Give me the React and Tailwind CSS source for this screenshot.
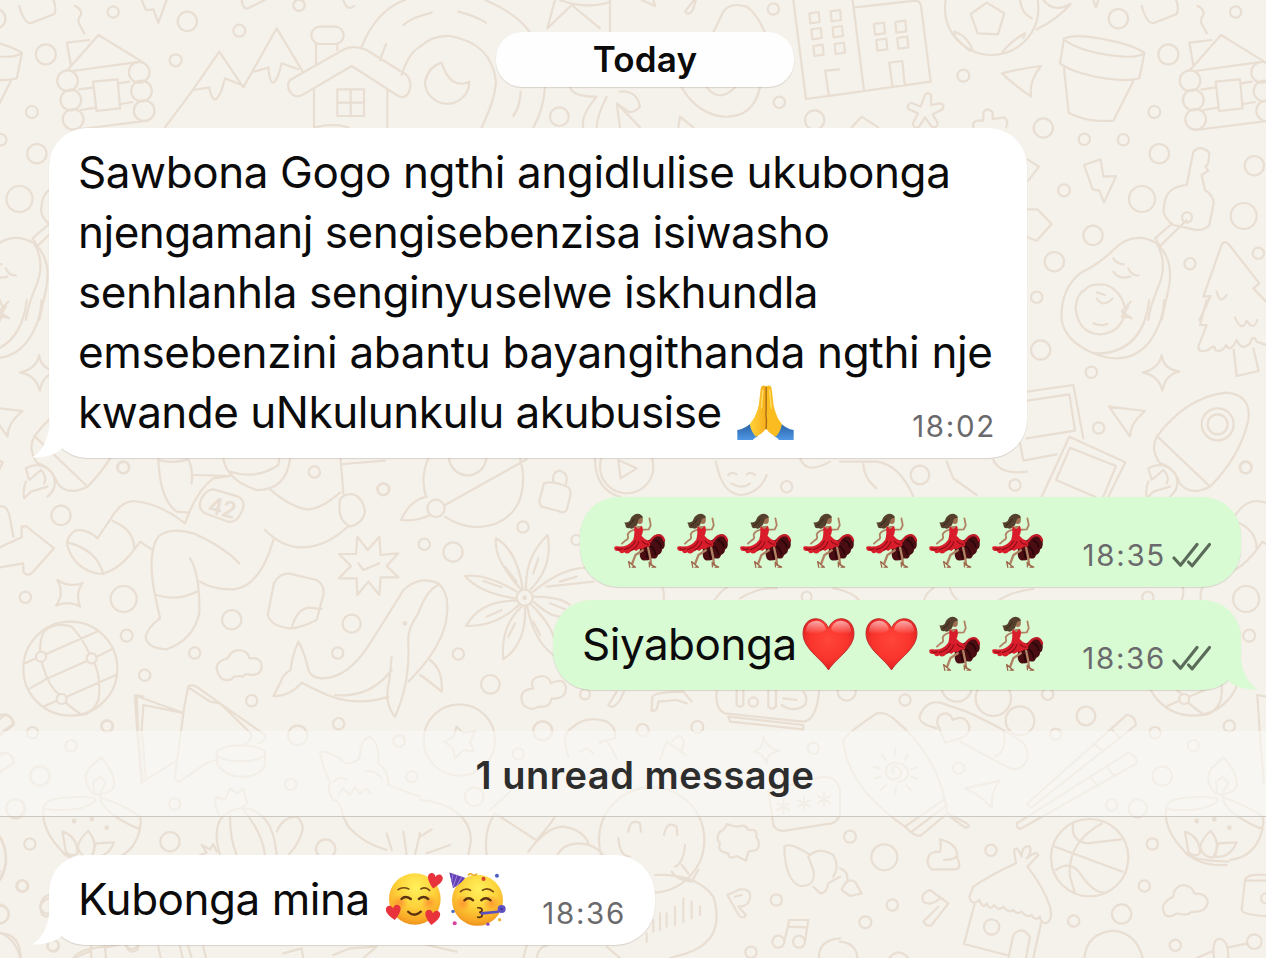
import React from "react";

const PERIOD = 1122.5;

// Doodle sheets: each is drawn on a 3x grid whose origin sits at (x, y).
const rightSheets = [
  {
    x: 840, y: 0,
    d: "M45,22L225,2Q240,2 243,18L272,245L0,283M38,0L72,272M102,72l30,-4l3,32l-30,4zM166,66l30,-4l3,32l-30,4zM109,120l30,-4l3,32l-30,4zM172,114l30,-4l3,32l-30,4zM157,258L148,188L187,183L194,255M440,8L493,40L474,103L413,100L392,42ZM345,95Q385,110 398,152M343,95L345,112L388,152M485,160Q510,125 555,100L550,114M540,0Q545,40 575,55M610,0Q640,40 692,12Q650,60 590,88M760,0L768,22L775,0M486,220Q545,205 603,198Q565,245 574,290Q530,262 486,220M672,115Q700,105 740,110Q860,125 913,158Q900,172 850,170Q730,160 676,122M672,115L660,190Q700,220 800,236Q870,245 898,235L913,160M672,205L686,338Q740,368 820,362L880,243M905,18Q920,70 940,70L1010,42Q1018,25 1008,0M1073,18Q1095,30 1090,45Q1075,62 1090,80L1100,100M1050,210L1143,105L1278,188M1060,195L1048,128L1115,120M1065,213L1270,185M1127,245L1200,238L1208,325L1137,333ZM1085,268L1125,263M1090,330L1135,323M1205,250L1235,245M1210,312L1245,306M1067,390L1290,362M255,285q8,-12 18,0l0,30l25,-5q18,2 10,18l-30,15l15,25q0,18 -18,12l-20,-28l-18,28q-18,8 -18,-10l15,-30l-28,-12q-8,-14 8,-20l28,12ZM400,382q-5,-15 12,-20l18,0l0,-25q12,-18 28,0l0,20l35,-5q15,12 5,30M35,382L65,350L115,382M562,478L597,500L565,542M562,628L592,628L635,672L590,722L562,712M732,495L782,478L790,530L828,528L792,608L778,572L758,568ZM1040,555L1060,455Q1080,432 1108,458L1105,490L1096,500L1105,512L1085,525L1095,570Q1125,590 1120,615L1108,675Q1090,695 1060,688L1000,675Q965,650 972,620Q975,560 1040,555M995,672L945,715L960,738L1040,660M665,960Q660,870 720,820Q780,790 820,750Q880,690 950,730Q1005,780 985,870L965,960M950,730Q985,790 955,860Q930,920 925,960M820,775Q830,792 852,793M820,815Q835,840 870,830M865,805Q875,828 895,826M707,925Q710,880 735,870Q750,848 800,855Q845,875 855,925M770,877L795,885M770,895Q790,925 818,895M872,905L845,935L875,955M1078,960L1112,888L1090,890L1143,740Q1152,715 1168,735L1258,850L1240,865L1278,905M1130,875Q1140,915 1160,885",
    c: [[455,25,140],[835,56,29],[1187,36,17],[985,163,30],[370,227,18],[610,384,29],[733,418,17],[850,419,17],[943,336,18],[958,461,29],[1243,497,29],[672,571,18],[906,597,39],[1211,648,39],[759,706,29],[643,785,29],[1050,791,17],[1255,760,17],[590,892,17],[1050,242,31],[1060,300,31],[1067,358,31],[1265,217,31],[1272,273,31],[1280,332,31],[1041,652,15]],
  },
  {
    x: 1020, y: 300,
    d: "M125,60Q135,120 210,155Q320,205 385,130Q430,70 432,0M388,0Q370,150 245,160Q220,160 210,155M167,25Q175,100 240,103Q300,100 315,40M220,70Q240,80 262,72M330,52L305,50L325,20M560,0L540,75L560,75L535,140Q535,160 565,150Q585,130 585,150Q605,160 618,135Q630,160 650,120Q665,155 690,130Q700,100 710,125L738,135M645,52Q665,100 680,62Q700,95 712,60M641,150L650,228L716,213L700,145M425,165Q430,208 478,214Q435,225 427,272Q415,225 368,218Q418,205 425,165ZM267,320L375,333Q330,370 330,410ZM410,410Q500,290 620,278Q695,285 685,360Q660,470 570,560Q510,590 480,550Q460,500 420,490Q390,450 410,410M415,412L565,555M385,505Q430,480 465,520Q485,560 450,590M385,505L395,540L430,510Q450,530 440,550M385,545Q375,570 380,595L400,575L450,560M22,275L160,255L190,415M22,302L148,283L165,392L20,415M0,430L10,482L110,463M65,590L148,410L316,487L265,590M225,590L108,540L150,443L288,498L250,590",
    c: [[62,150,29],[214,217,17],[236,384,17],[677,502,18],[593,373,30],[593,373,48]],
  },
  {
    x: 840, y: 680,
    d: "M10,180Q20,160 110,100Q135,95 160,115Q300,230 322,400L245,465Q230,475 195,440Q20,320 10,180M195,440L310,360M215,455L322,375M322,400L380,430Q395,440 375,443L330,410M160,280Q150,265 165,258Q190,265 180,290Q150,310 138,280Q135,250 165,248Q205,250 205,285Q195,305 175,305M165,205V225M125,225L138,240M100,260L120,265M103,295L122,290M122,330L138,315M167,342V322M212,330L198,315M232,297L214,290M230,262L212,268M205,225L194,240M290,145Q230,130 240,105Q260,60 300,68L380,95Q500,150 545,185Q570,210 560,240Q545,275 510,265L360,185M490,155Q505,210 465,230M315,188L292,130Q290,100 320,100Q335,105 338,120Q375,100 388,140Q390,165 360,175ZM375,325L478,302Q450,340 457,385Q420,345 375,325M560,372L860,105Q885,105 888,135L575,382ZM815,148L840,175M760,190L790,215M530,430L865,218Q890,225 890,250L545,445Q530,450 530,430M753,295L775,320M800,262L825,290M645,500L848,575M700,430Q690,480 740,490L843,478M785,430Q680,490 690,590L705,640M648,570Q690,540 720,580Q760,640 795,638M1150,232Q1195,280 1190,320Q1170,350 1125,340Q1090,300 1115,265L1150,232M1130,335L1128,305L1148,290L1165,310L1150,335V355M978,385Q980,355 1050,352Q1130,348 1135,358Q1120,385 1050,390Q1000,392 978,385Q970,450 1035,515Q1080,560 1160,555M1150,360Q1160,400 1260,445Q1275,440 1268,410Q1230,380 1145,350M1268,445Q1250,530 1170,540M1035,455Q1080,470 1080,520Q1060,535 1045,515ZM1112,453Q1145,490 1120,532Q1090,535 1080,500Q1090,470 1112,453M1190,487L1135,490L1125,530Q1170,535 1190,487M1035,515Q1040,540 1165,545M300,478Q355,490 352,535Q365,560 350,568H275Q255,550 268,525Q275,515 300,515Q305,495 300,478M312,540Q345,540 352,525M300,655Q270,680 250,665Q240,640 270,630L325,670L275,735Q260,742 250,725L295,680M388,650L400,620Q460,580 528,550L522,510Q530,495 545,530Q545,495 570,500Q575,520 560,535Q590,510 595,525L562,560Q610,620 630,680Q640,725 615,730Q600,725 600,710Q585,725 575,705Q560,715 545,695Q530,705 520,690Q505,700 490,680Q475,695 462,675Q450,695 440,670Q430,690 418,660Q395,680 388,650M403,675L372,792L500,825M603,730L580,834M505,834L520,765Q545,735 570,770L558,834M975,705Q955,670 1000,650Q1000,620 1030,615Q1060,620 1062,640Q1105,640 1103,670Q1095,700 1055,695Q1040,710 1010,700Q990,715 975,705M1278,585Q1220,580 1215,600L1205,690Q1210,705 1278,708M1215,602H1278M733,834Q740,760 820,752Q890,760 908,834M1070,834L1120,812M1165,802L1222,790M1122,834Q1115,775 1140,777Q1165,780 1165,834M0,785Q50,790 52,834M148,834Q175,800 205,834M0,565Q25,575 22,600M5,630Q20,590 45,605L65,640L30,648ZM1278,50L1252,45L1262,200L1272,310",
    c: [[350,20,45],[460,55,53],[540,122,43],[20,35,27],[195,60,17],[738,108,28],[647,163,17],[623,43,17],[945,158,17],[1168,138,17],[1060,197,17],[967,288,29],[893,385,27],[815,375,17],[356,265,17],[30,470,18],[133,532,39],[453,511,17],[157,675,17],[76,727,18],[937,492,17],[913,618,17],[845,702,29],[701,723,17],[1006,796,17],[749,533,116],[455,741,23],[1243,785,22],[1278,655,15],[1070,423,4],[1123,417,4],[1168,443,4]],
  },
];

const leftSheets = [
  {
    x: 0, y: 440,
    d: "M0,322L65,292L65,260L78,258L162,325L95,400Q80,410 70,395L70,370L0,382M0,200Q20,195 28,225L40,290M172,420Q210,445 248,428Q225,460 240,500Q205,480 168,497Q195,460 172,420M137,643L290,575M75,670L108,655M290,650L335,628M137,718L262,662M90,745L137,718M200,770L348,705M130,800L170,782M120,635Q120,590 135,572Q165,545 215,560Q245,590 268,640M125,665Q145,740 178,763M283,668Q305,720 295,780Q280,820 245,825Q210,800 197,788M330,240Q360,185 400,183Q480,190 555,250Q590,150 640,115L690,108M580,105L685,108M475,58Q480,180 530,215L565,218M475,60Q520,72 565,58Q580,90 575,130M670,55Q680,120 770,150Q860,150 870,55M688,95Q770,120 835,75L838,55M640,148L715,170Q740,185 725,215Q710,250 685,245L615,220Q590,205 605,175Q620,148 640,148M810,148Q870,200 920,208Q960,210 1020,158M1020,180Q1030,160 1060,163Q1090,175 1095,215Q1090,250 1050,260Q1010,240 1020,180M1022,58L1030,160M1030,72L1155,62M795,270Q850,325 910,322Q980,320 1045,258M820,300Q780,440 700,448Q640,450 600,425M330,240L292,295Q260,265 225,272Q195,295 203,320Q225,390 300,402Q360,395 420,305L455,328M338,243Q405,270 402,330M205,308Q290,330 310,402M570,355Q600,400 598,520Q580,600 500,628Q440,625 437,590Q440,565 480,535L465,465Q440,340 475,290Q510,260 580,280Q670,320 718,370M470,465Q530,485 590,455M865,400L950,420Q975,435 970,465L950,540Q900,565 870,565Q815,560 803,525L822,430Q835,402 865,400M875,565Q890,505 930,503L965,507",
    c: [[211,686,141],[123,650,15],[275,655,15],[185,777,15],[370,83,17],[183,226,29],[76,472,17],[371,477,39],[380,587,18]],
  },
];

const middleSheets = [
  {
    x: 0, y: 0,
    d: "M425,0L438,30L460,28L475,68L500,0M725,0Q730,35 750,22L795,0M1030,0Q1040,35 1062,18M495,382L575,275L658,155L730,262L830,85L910,218M580,270L628,262Q640,330 665,270L675,235L725,255M762,215L805,203Q812,280 835,225L845,190L895,208M960,80H1005a26,26 0 0 1 0,52H960a26,26 0 0 1 0,-52ZM948,130V190M1012,130V150M870,240L1020,155Q1055,130 1100,150L1220,225Q1240,250 1225,280Q1210,300 1190,285L1055,198L915,280Q885,300 870,275Q858,255 870,240M942,265V382M1162,268V382M1012,268H1092V348H1012ZM1052,268V348M1012,308H1092M945,382Q1000,368 1045,382M1085,140Q1130,30 1215,0M1140,180L1158,132M1205,225Q1225,160 1260,140M1210,75Q1235,55 1260,48",
    c: [[562,64,29],[718,92,18],[527,181,18],[897,16,17]],
  },
  {
    x: 420, y: 0,
    d: "M0,140Q40,105 90,108Q215,130 228,245Q225,300 185,382M65,188Q25,200 15,245A66,66 0 0 0 148,245Q90,270 65,188M195,0Q290,40 330,97M0,48L35,38M115,35Q160,45 198,68M375,262Q370,330 340,382M302,275Q300,320 280,348M405,0L382,85L450,20M570,0V95M455,15L540,85M420,0Q500,30 570,5M665,0L705,18L700,0M450,262Q460,290 530,290Q480,350 490,382M560,290Q530,350 530,382M600,275Q650,270 660,320Q640,340 625,335L590,310L600,382M590,310L660,382M880,97L910,35Q930,5 980,20Q1010,40 1035,97M785,262Q830,340 910,350Q1000,355 1020,262M860,262Q900,310 945,262M822,0L795,35Q810,50 820,25L828,0M775,382L780,350L820,382M1120,0L1158,297L1260,283M1168,40l28,-4l3,30l-28,4zM1174,88l28,-4l3,30l-28,4zM1180,138l28,-4l3,30l-28,4zM1232,34l28,-4l3,30l-28,4zM1238,82l28,-4l3,30l-28,4zM1244,132l28,-4l3,30l-28,4zM1258,208L1216,212L1226,285",
    c: [[418,350,28],[1060,27,17],[1078,307,17],[1184,360,29]],
  },
  {
    x: 0, y: 440,
    d: "M1072,290L1103,330L1138,290L1142,345L1195,340L1160,378L1195,412L1142,412L1138,465L1105,425L1072,465L1070,415L1017,415L1053,378L1017,342L1068,342ZM1075,370L1090,390L1138,370M660,710Q640,680 660,665Q675,655 683,655Q700,620 735,635Q745,640 748,655Q785,650 785,680Q785,705 750,705Q735,698 730,710Q700,705 695,718Q670,725 660,710M548,818L410,768L415,880L428,1025L525,965M545,818L430,795L425,870L437,1010M565,738Q575,733 590,740L660,790L795,885Q800,905 775,910M570,745L630,785L660,790L752,880Q760,895 735,912M565,738L553,800L525,1005Q520,1025 540,1025L610,975Q640,960 655,960M925,690Q915,640 895,605Q875,650 872,690Q850,700 840,730L820,768Q870,770 905,728L960,755M925,690Q935,715 965,714",
    c: [[695,539,29],[584,639,17],[434,706,17],[322,859,17],[943,96,17],[1150,148,17],[1055,551,27],[1013,639,17],[755,782,17],[1016,851,17],[893,886,29],[214,917,17]],
  },
  {
    x: 320, y: 450,
    d: "M0,685Q80,690 150,580Q220,470 250,420Q300,375 355,400Q390,430 380,500Q370,590 265,695M355,405Q320,420 295,490Q260,540 265,580Q270,700 225,800Q190,760 208,690L215,620M0,725Q100,775 205,740M45,735Q150,745 215,660M330,630Q370,660 365,725Q330,695 300,675M318,140Q300,80 325,25M375,200Q450,250 530,220Q620,180 608,60L600,25M375,165L620,28M320,140Q270,150 243,210Q290,215 330,195M672,100Q700,90 745,112Q755,120 750,140L740,180Q730,192 715,183L665,170Q655,160 660,145ZM700,95Q695,65 720,62Q748,70 737,105M605,420Q520,330 528,265Q590,300 608,415M618,415Q615,320 683,255Q700,350 632,418M640,425Q740,340 830,355M680,410L820,395M590,425Q500,370 435,378Q480,430 588,445M590,452Q480,450 438,528Q530,530 600,462M605,470Q540,530 550,628Q620,580 615,470M622,470Q640,570 700,615M632,462Q690,520 700,560M640,440Q720,440 750,465M640,455Q690,500 720,500M555,350L590,395M655,325L640,370M490,393L545,412M500,500L545,480M585,520L565,560M640,515L660,555M690,460L735,478M720,395L770,380M610,765Q590,720 640,715Q625,685 665,678Q690,680 692,700Q735,680 738,715Q735,750 695,745Q690,775 655,770Q635,785 610,765M825,25Q825,120 900,140",
    c: [[190,118,18],[313,283,17],[399,306,29],[609,231,17],[415,612,17],[511,703,28],[348,175,26],[237,874,17],[668,842,28],[769,270,15],[795,733,15],[418,870,107],[614,443,24],[614,443,4],[255,520,4],[443,20,56]],
  },
  {
    x: 0, y: 700,
    d: "M650,160a73,24 0 1 0 146,0a73,24 0 1 0 -146,0L652,195Q680,230 722,230Q780,230 795,195L795,160M0,45Q30,35 42,70L0,100M0,160Q30,150 42,185L0,220M960,155Q970,210 990,245Q980,275 1000,300Q1020,300 1030,350L1045,380Q1090,430 1160,450M960,155Q1000,155 1035,190Q1070,190 1080,170Q1080,120 1110,110Q1140,130 1135,190Q1165,210 1165,255L1260,290M1095,215Q1120,205 1145,235M1000,245Q1020,225 1040,240M1015,285L1030,265L1050,285L1065,262L1080,280L1100,265L1110,280M1160,400L1175,450M1210,395L1220,465M1245,465L1260,400M660,465Q640,400 660,360Q690,320 740,325Q820,340 830,465M690,345Q690,420 710,465M725,325Q785,390 795,465M830,395Q850,350 890,350Q915,370 905,400Q890,440 865,465M655,340Q640,310 650,290L675,300L690,265L712,280L730,265L742,310L720,325M600,465L620,458L605,435L630,448L640,432L650,455M0,410Q20,450 18,490Q10,530 0,540M0,700Q60,700 62,774M220,774Q240,745 320,740M475,740L482,774M540,740L548,774M565,740L575,774M610,740L618,774M850,760L905,745L910,774M1000,765L1050,745L1130,740L1090,774M145,585Q125,590 120,620Q130,645 145,640",
    c: [[120,228,29],[47,326,29],[524,312,17],[510,425,29],[977,447,29],[68,558,17],[872,253,17],[1197,122,18],[1235,230,17],[0,643,26],[160,738,17],[398,738,17]],
  },
  {
    x: 420, y: 680,
    d: "M110,140L128,158L165,155L150,185L162,215L130,210L105,235L100,205L72,185L100,172ZM445,230Q420,160 460,140Q500,105 560,125Q590,140 585,175L540,185M480,215L500,205L520,220M540,190L560,180L590,235M565,75L590,35M565,75Q580,90 600,60L612,35M695,92L697,50Q710,35 790,35L815,65M695,92Q712,98 715,65L770,60L800,70M890,32Q885,90 915,100L1150,125Q1190,120 1197,35M925,110L1150,135L1150,148L930,125ZM950,32V75Q960,85 970,75V32M1045,32V80Q1055,92 1068,80V32M1085,75Q1120,100 1155,75Q1165,50 1150,35M1090,55L1130,60M720,240L740,185L797,225M757,185Q780,150 792,185L785,215M1030,170Q1040,205 1078,212Q1040,220 1040,250Q1030,220 1003,215Q1030,205 1030,170M1235,430L1095,452Q1070,455 1060,435L1045,330L1210,290Q1250,290 1260,330V400Q1255,425 1235,430M1072,370l36,20M1072,390l36,-20M1090,360v40M1134,360l36,20M1134,380l36,-20M1152,350v40M1194,348l36,20M1194,368l36,-20M1212,338v40M625,455Q630,415 660,430L663,455M732,465Q740,420 770,440L772,465M595,475Q600,530 630,530M795,495Q790,550 765,560M755,575Q770,600 815,605L835,570M785,555L805,580M0,358Q150,380 153,480L145,525M0,470L35,448M20,520L90,495M210,390L270,335M200,525Q190,450 225,400L345,478M350,480Q395,430 405,408M325,515Q380,440 430,440Q490,450 505,490M412,525Q430,490 480,490Q530,495 550,525M705,585Q830,580 880,650Q920,780 800,820L750,834M700,720V755M720,700V750M740,700V740M765,680V735M790,655V725M815,665V715M840,680V705M680,760V785M560,800L600,834M900,455Q915,450 920,432Q940,440 955,440Q975,430 985,450Q1015,445 1008,470Q1025,490 1010,510L985,515L978,542L950,528Q925,540 925,520Q890,515 900,490Q885,475 900,455M1093,500Q1110,485 1170,525Q1200,500 1240,525Q1260,560 1240,590M1093,500Q1095,600 1140,618Q1190,620 1180,570L1165,530M1180,620L1200,640Q1220,640 1225,610Q1240,600 1260,590M922,645L960,628Q995,625 990,655Q985,680 955,680L978,705Q970,718 958,708ZM945,650L965,645M1093,785L1108,720L1165,720L1155,785M1105,740L1160,742M1197,834Q1195,780 1260,775M20,795L110,815M310,834L320,797M350,834Q355,800 380,797",
    c: [[368,153,29],[668,150,18],[832,141,18],[295,222,17],[1180,205,17],[163,350,28],[1069,660,17],[993,817,17],[1000,66,14],[695,480,158],[1075,785,18],[1137,785,18]],
  },
  {
    x: 600, y: 455,
    d: "M55,15L110,40L62,70ZM348,20Q365,115 420,120Q480,115 500,60M385,60Q395,48 410,58M440,58Q452,48 465,60M395,85Q425,105 450,85M600,10Q620,60 690,20M720,20L830,20Q900,30 940,125M790,20Q790,70 830,100M1040,20L1060,70L1130,120M1180,15Q1200,60 1280,50M190,440Q195,420 188,400M340,440Q360,410 380,398M420,430Q480,395 530,400M700,400Q760,410 780,440M970,440Q980,410 1000,400M1050,400Q1060,430 1080,440M1190,440Q1230,410 1300,402",
    c: [[80,35,80],[560,95,17],[960,60,28],[620,425,15],[1245,90,17]],
  },
];

function Sheet({ sheet }) {
  return (
    <g transform={`translate(${sheet.x} ${sheet.y}) scale(0.33333)`}>
      <path d={sheet.d} />
      {sheet.c.map(([cx, cy, r], i) => (
        <circle key={i} cx={cx} cy={cy} r={r} />
      ))}
    </g>
  );
}

function Wallpaper() {
  return (
    <svg
      className="pointer-events-none absolute inset-0 h-[958px] w-[1266px]"
      viewBox="0 0 1266 958"
      fill="none"
      stroke="#e9ded2"
      strokeWidth="6.6"
      strokeLinecap="round"
      strokeLinejoin="round"
      aria-hidden="true"
    >
      {middleSheets.map((s, i) => <Sheet key={i} sheet={s} />)}
      {[0, -PERIOD].map((dx) => (
        <g key={dx} transform={`translate(${dx} 0)`}>
          {rightSheets.map((s, i) => <Sheet key={i} sheet={s} />)}
        </g>
      ))}
      {[0, PERIOD].map((dx) => (
        <g key={dx} transform={`translate(${dx} 0)`}>
          {leftSheets.map((s, i) => <Sheet key={i} sheet={s} />)}
        </g>
      ))}
      <text
        x="207" y="512" transform="rotate(14 207 512)"
        fontFamily="Inter, sans-serif" fontSize="22" strokeWidth="0.8" fill="#e9ded2"
      >42</text>
    </svg>
  );
}

function Dancer() {
  return (
    <svg className="h-[56px] w-[53px] shrink-0" viewBox="0 0 160 168" fill="none" strokeLinecap="round" strokeLinejoin="round">
      <path d="M84 92 110 80 124 70Q134 60 144 68Q158 74 156 90Q158 104 148 110Q148 122 136 126Q132 140 118 136L106 142 92 143Q74 138 84 92Z" fill="#4a0d12" />
      <path d="M128 82Q142 88 144 102M112 98Q126 108 128 124M100 116L104 134" stroke="#26060a" strokeWidth="5" />
      <path d="M90 112 68 126 58 152M106 104 112 132 115 156" stroke="#b08264" strokeWidth="7" />
      <path d="M47 146 51 164M47 146Q60 158 68 163H58M109 148 110 162M110 150Q120 160 129 163H118" stroke="#9a5f44" strokeWidth="3.5" />
      <path d="M66 50Q42 56 45 68 48 78 38 82L27 92" stroke="#b08264" strokeWidth="5.5" />
      <path d="M86 50 108 49 114 36 110 16" stroke="#b08264" strokeWidth="5.5" />
      <path d="M66 40 84 38 90 54 80 60 66 56Z" fill="#b08264" />
      <path d="M61 80Q66 66 64 42L68 40Q76 56 86 38L89 42Q92 58 86 68L96 78Q116 84 112 100Q98 98 90 108Q78 106 70 114Q62 108 54 116Q44 126 34 118Q24 126 18 114Q4 116 4 106Q2 98 14 100Q44 104 61 80Z" fill="#d91d2a" />
      <path d="M112 86Q122 66 140 66Q150 68 154 82" stroke="#c41c28" strokeWidth="7" />
      <path d="M68 84Q58 104 34 110M78 86Q74 102 56 112M88 84Q94 94 106 94M12 107Q20 112 28 107" stroke="#8f0d1a" strokeWidth="3.5" />
      <ellipse cx="81" cy="20" rx="9" ry="13" fill="#a07254" />
      <path d="M60 8Q72-3 86 6Q92 12 88 15Q78 14 76 24Q74 38 66 40Q60 50 50 45Q40 48 38 39Q38 33 34 28Q48 30 52 20Q54 12 60 8Z" fill="#54402c" />
      <path d="M46 37Q58 32 64 18" stroke="#35261a" strokeWidth="3" />
    </svg>
  );
}

function Heart() {
  return (
    <svg className="h-[53px] w-[53px] shrink-0" viewBox="0 0 156 158">
      <defs>
        <radialGradient id="heartFill" cx="50%" cy="42%" r="60%">
          <stop offset="0" stopColor="#ff4539" />
          <stop offset="0.6" stopColor="#f9352d" />
          <stop offset="1" stopColor="#dd1e20" />
        </radialGradient>
        <linearGradient id="heartGloss" x1="0" y1="0" x2="0" y2="1">
          <stop offset="0" stopColor="#fff" stopOpacity="0.6" />
          <stop offset="1" stopColor="#fff" stopOpacity="0" />
        </linearGradient>
      </defs>
      <path d="M78 30C70 10 54 2 40 2C18 2 2 20 2 46C2 92 58 122 78 155C98 122 154 92 154 46C154 20 138 2 116 2C102 2 86 10 78 30Z" fill="url(#heartFill)" stroke="#b3262a" strokeWidth="2.5" />
      <path d="M10 40C12 18 26 8 42 8C58 9 68 20 70 34C56 50 20 52 10 40Z" fill="url(#heartGloss)" />
      <path d="M146 40C144 18 130 8 114 8C98 9 88 20 86 34C100 50 136 52 146 40Z" fill="url(#heartGloss)" />
    </svg>
  );
}

function Pray() {
  return (
    <svg className="h-[55px] w-[57px] shrink-0" viewBox="0 0 168 164">
      <defs>
        <linearGradient id="sleeve" x1="0" y1="0" x2="0" y2="1">
          <stop offset="0" stopColor="#2a62a6" />
          <stop offset="1" stopColor="#4f97e6" />
        </linearGradient>
        <linearGradient id="hand" x1="0" y1="0" x2="1" y2="0">
          <stop offset="0" stopColor="#ffd23a" />
          <stop offset="1" stopColor="#f7ae1c" />
        </linearGradient>
      </defs>
      <path d="M0 134Q22 130 38 116L62 152Q50 158 46 164H0Z" fill="url(#sleeve)" />
      <path d="M168 134Q146 130 132 116L108 152Q122 158 124 164H168Z" fill="url(#sleeve)" />
      <path d="M86 4Q74-2 70 8L64 60Q58 88 46 104Q36 114 38 122Q44 144 56 154Q76 144 86 130Z" fill="url(#hand)" />
      <path d="M86 4Q98-2 102 8L108 60Q114 88 124 104Q134 114 132 122Q126 144 114 154Q94 144 86 130Z" fill="#fbbc22" />
      <path d="M86 6V76Q84 90 87 104L86 132" stroke="#a56a10" strokeWidth="4" fill="none" />
      <path d="M76 14L72 70M96 14L101 70" stroke="#ffdf68" strokeWidth="4" fill="none" />
    </svg>
  );
}

function FaceDefs({ id }) {
  return (
    <defs>
      <radialGradient id={id} cx="52%" cy="28%" r="74%">
        <stop offset="0" stopColor="#fff15c" />
        <stop offset="0.5" stopColor="#fdd23b" />
        <stop offset="0.85" stopColor="#f9a826" />
        <stop offset="1" stopColor="#e98d1c" />
      </radialGradient>
      <radialGradient id={`${id}Blush`}>
        <stop offset="0" stopColor="#ff6d2a" stopOpacity="0.55" />
        <stop offset="1" stopColor="#ff6d2a" stopOpacity="0" />
      </radialGradient>
    </defs>
  );
}

const tinyHeart = "M0 -13C-3 -22 -12 -25 -18 -20C-27 -13 -22 2 0 22C22 2 27 -13 18 -20C12 -25 3 -22 0 -13Z";

function LoveFace() {
  return (
    <svg className="h-[54px] w-[57px] shrink-0" viewBox="0 0 170 160" fill="none" strokeLinecap="round">
      <FaceDefs id="loveFace" />
      <circle cx="86" cy="80" r="77" fill="url(#loveFace)" />
      <circle cx="42" cy="90" r="24" fill="url(#loveFaceBlush)" />
      <circle cx="128" cy="90" r="24" fill="url(#loveFaceBlush)" />
      <path d="M36 52Q50 42 68 50M104 50Q118 42 130 54" stroke="#7a4a12" strokeWidth="5" />
      <path d="M46 80Q58 68 74 80M98 80Q112 68 126 80" stroke="#5c3310" strokeWidth="7" />
      <path d="M66 118Q84 136 104 118" stroke="#5c3310" strokeWidth="7" />
      <path transform="translate(145 27) rotate(12)" d={tinyHeart} fill="#e8323c" />
      <path transform="translate(23 121) rotate(-8)" d={tinyHeart} fill="#e8323c" />
      <path transform="translate(138 136) rotate(8)" d={tinyHeart} fill="#e8323c" />
    </svg>
  );
}

function PartyFace() {
  return (
    <svg className="h-[55px] w-[57px] shrink-0" viewBox="0 0 170 163" fill="none" strokeLinecap="round">
      <FaceDefs id="partyFace" />
      <circle cx="85" cy="84" r="76" fill="url(#partyFace)" />
      <circle cx="42" cy="92" r="24" fill="url(#partyFaceBlush)" />
      <circle cx="126" cy="92" r="24" fill="url(#partyFaceBlush)" />
      <path d="M34 58Q48 46 64 54M100 54Q116 44 132 58" stroke="#7a4a12" strokeWidth="5" />
      <path d="M46 84Q58 72 72 84M96 84Q110 72 124 84" stroke="#5c3310" strokeWidth="7" />
      <path d="M86 106Q102 106 98 116Q94 120 90 119Q102 122 98 132Q94 136 86 134" stroke="#5c3310" strokeWidth="5" />
      <path d="M1 1L48 17Q40 32 12 48Z" fill="#6440b4" />
      <path d="M12 5L8 28M24 9L13 42M38 14L24 40" stroke="#9c84dc" strokeWidth="3" />
      <path d="M98 123L146 118" stroke="#5b50c0" strokeWidth="8" />
      <circle cx="157" cy="110" r="12" fill="#6352c4" />
      <circle cx="157" cy="110" r="4" fill="#4338a0" />
      <circle cx="103" cy="20" r="6" fill="#d8442e" />
      <circle cx="143" cy="11" r="6" fill="#4a61c4" />
      <circle cx="17" cy="152" r="6" fill="#d8409a" />
      <circle cx="12" cy="117" r="5" fill="#4a61c4" />
      <circle cx="116" cy="155" r="5" fill="#8a48c0" />
      <circle cx="151" cy="142" r="5" fill="#e9b437" />
      <path d="M58 8Q64 2 70 8Q76 12 82 6" stroke="#eab02c" strokeWidth="5" />
    </svg>
  );
}

function Checks() {
  return (
    <svg className="h-[26px] w-[40px] shrink-0" viewBox="0 0 40 26" fill="none" stroke="#5b6b59" strokeWidth="3.1" strokeLinecap="round" strokeLinejoin="round">
      <path d="M2 16L8.5 23.3L25 2.5" />
      <path d="M16.5 20L20.2 23.8L37.5 2.5" />
    </svg>
  );
}

function Tail({ side }) {
  return side === "left" ? (
    <svg className="absolute bottom-0 -left-[18px] h-[44px] w-[50px]" viewBox="0 0 50 44" fill="#fff">
      <path d="M19 0C19 20 14 36 1 43.6C14 43.5 24 41 30 35.5L46 20V0Z" />
    </svg>
  ) : (
    <svg className="absolute bottom-0 -right-[18px] h-[44px] w-[50px]" viewBox="0 0 50 44" fill="#d9fbd3">
      <path d="M31 0C31 20 36 36 49 43.6C36 43.5 26 41 20 35.5L4 20V0Z" />
    </svg>
  );
}

const Time = ({ children }) => (
  <time className="text-[29.5px] leading-[30px] tracking-[1.7px] text-[#6a6a6c]">{children}</time>
);

const bubble = "relative flex justify-between text-[44px] leading-[60px] text-[#0b0b0b] shadow-[0_1px_1px_rgba(60,50,40,0.16)]";

export default function App() {
  return (
    <main className="relative flex h-[958px] w-[1266px] flex-col overflow-hidden bg-[#f5f1eb] font-['Inter',sans-serif]">
      <Wallpaper />

      <div className="relative mt-[32px] ml-[496px] flex h-[55px] w-[298px] items-center justify-center rounded-[26px] bg-[#fefefe] text-[35px] font-semibold text-[#0b0b0b] shadow-[0_1px_1px_rgba(60,50,40,0.16)]">
        <span className="tracking-[0.2px]">Today</span>
      </div>

      <section className={`${bubble} mt-[41px] ml-[49px] h-[330px] w-[978px] items-end rounded-[38px] bg-white pr-[31px] pl-[29px]`}>
        <Tail side="left" />
        <div className="relative mb-[16px] whitespace-nowrap">
          <p className="tracking-[-0.41px]">Sawbona Gogo ngthi angidlulise ukubonga</p>
          <p className="tracking-[-0.5px]">njengamanj sengisebenzisa isiwasho</p>
          <p className="tracking-[-0.46px]">senhlanhla senginyuselwe iskhundla</p>
          <p className="tracking-[-0.35px]">emsebenzini abantu bayangithanda ngthi nje</p>
          <div className="flex h-[60px] w-[716px] items-center justify-between">
            <span className="tracking-[-0.5px]">kwande uNkulunkulu akubusise</span>
            <Pray />
          </div>
        </div>
        <div className="mb-[17px] -ml-[90px] flex"><Time>18:02</Time></div>
      </section>

      <section className={`${bubble} mt-[39px] ml-[580px] h-[90px] w-[661px] items-end rounded-[38px] bg-[#d9fbd3] pr-[29px] pl-[33px]`}>
        <div className="mb-[18px] flex gap-[10px]">
          {Array.from({ length: 7 }, (_, i) => <Dancer key={i} />)}
        </div>
        <div className="mb-[17px] flex items-center gap-[6px]"><Time>18:35</Time><Checks /></div>
      </section>

      <section className={`${bubble} mt-[13px] ml-[553px] h-[90px] w-[688px] items-end rounded-[38px] bg-[#d9fbd3] pr-[29px] pl-[29px]`}>
        <Tail side="right" />
        <div className="relative mb-[16px] flex w-[462px] items-center justify-between">
          <span className="tracking-[-0.5px]">Siyabonga</span>
          <span className="flex items-center gap-[10px]">
            <Heart /><Heart /><Dancer /><Dancer />
          </span>
        </div>
        <div className="relative mb-[17px] flex items-center gap-[6px]"><Time>18:36</Time><Checks /></div>
      </section>

      <div className="relative mt-[41px] flex h-[86px] w-full items-center justify-center border-b border-[#cbc8c2] bg-[#fafaf6]/60 pt-[3px] pl-[24px] text-[38px] font-semibold tracking-[0.5px] text-[#2d2d2d]">
        <span>1 unread message</span>
      </div>

      <section className={`${bubble} mt-[38px] ml-[49px] h-[90px] w-[606px] items-end rounded-[40px] rounded-l-[36px] bg-white pr-[29px] pl-[29px]`}>
        <Tail side="left" />
        <div className="relative mb-[16px] flex w-[428px] items-center justify-between">
          <span className="tracking-[-0.48px]">Kubonga mina</span>
          <span className="flex items-center gap-[6px]"><LoveFace /><PartyFace /></span>
        </div>
        <div className="mb-[17px] flex"><Time>18:36</Time></div>
      </section>
    </main>
  );
}
